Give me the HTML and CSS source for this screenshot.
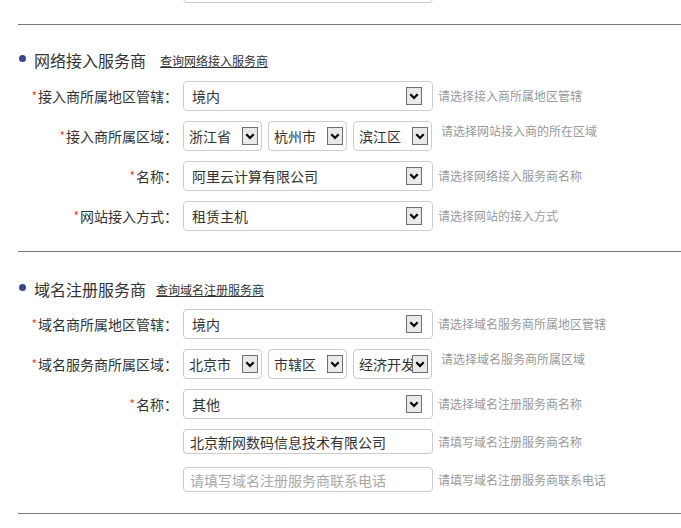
FILE: index.html
```html
<!DOCTYPE html>
<html lang="zh-CN">
<head>
<meta charset="utf-8">
<title>服务商信息</title>
<link rel="stylesheet" href="styles.css">
</head>
<body>
<div class="page">
  <div class="prev"><div class="prev-box"></div></div>

  <section class="group g1">
    <h2 class="group-title"><span class="dot"></span>网络接入服务商<a class="query q1" href="#">查询网络接入服务商</a></h2>

    <div class="row">
      <label class="label"><i class="req">*</i>接入商所属地区管辖：</label>
      <div class="select wide"><span class="val">境内</span><span class="arrow"><svg viewBox="0 0 10 7" width="10" height="7"><polyline points="1.3,1.3 5,5 8.7,1.3" fill="none" stroke="#000" stroke-width="2.2"/></svg></span></div>
      <span class="tip">请选择接入商所属地区管辖</span>
    </div>

    <div class="row">
      <label class="label"><i class="req">*</i>接入商所属区域：</label>
      <div class="selects">
        <div class="select small"><span class="val">浙江省</span><span class="arrow"><svg viewBox="0 0 10 7" width="10" height="7"><polyline points="1.3,1.3 5,5 8.7,1.3" fill="none" stroke="#000" stroke-width="2.2"/></svg></span></div>
        <div class="select small"><span class="val">杭州市</span><span class="arrow"><svg viewBox="0 0 10 7" width="10" height="7"><polyline points="1.3,1.3 5,5 8.7,1.3" fill="none" stroke="#000" stroke-width="2.2"/></svg></span></div>
        <div class="select small"><span class="val">滨江区</span><span class="arrow"><svg viewBox="0 0 10 7" width="10" height="7"><polyline points="1.3,1.3 5,5 8.7,1.3" fill="none" stroke="#000" stroke-width="2.2"/></svg></span></div>
      </div>
      <span class="tip tip-raised">请选择网站接入商的所在区域</span>
    </div>

    <div class="row">
      <label class="label"><i class="req">*</i>名称：</label>
      <div class="select wide"><span class="val">阿里云计算有限公司</span><span class="arrow"><svg viewBox="0 0 10 7" width="10" height="7"><polyline points="1.3,1.3 5,5 8.7,1.3" fill="none" stroke="#000" stroke-width="2.2"/></svg></span></div>
      <span class="tip">请选择网络接入服务商名称</span>
    </div>

    <div class="row">
      <label class="label"><i class="req">*</i>网站接入方式：</label>
      <div class="select wide"><span class="val">租赁主机</span><span class="arrow"><svg viewBox="0 0 10 7" width="10" height="7"><polyline points="1.3,1.3 5,5 8.7,1.3" fill="none" stroke="#000" stroke-width="2.2"/></svg></span></div>
      <span class="tip">请选择网站的接入方式</span>
    </div>
  </section>

  <section class="group g2">
    <h2 class="group-title"><span class="dot"></span>域名注册服务商<a class="query q2" href="#">查询域名注册服务商</a></h2>

    <div class="row">
      <label class="label"><i class="req">*</i>域名商所属地区管辖：</label>
      <div class="select wide"><span class="val">境内</span><span class="arrow"><svg viewBox="0 0 10 7" width="10" height="7"><polyline points="1.3,1.3 5,5 8.7,1.3" fill="none" stroke="#000" stroke-width="2.2"/></svg></span></div>
      <span class="tip">请选择域名服务商所属地区管辖</span>
    </div>

    <div class="row">
      <label class="label"><i class="req">*</i>域名服务商所属区域：</label>
      <div class="selects">
        <div class="select small"><span class="val">北京市</span><span class="arrow"><svg viewBox="0 0 10 7" width="10" height="7"><polyline points="1.3,1.3 5,5 8.7,1.3" fill="none" stroke="#000" stroke-width="2.2"/></svg></span></div>
        <div class="select small"><span class="val">市辖区</span><span class="arrow"><svg viewBox="0 0 10 7" width="10" height="7"><polyline points="1.3,1.3 5,5 8.7,1.3" fill="none" stroke="#000" stroke-width="2.2"/></svg></span></div>
        <div class="select small"><span class="val">经济开发区</span><span class="arrow"><svg viewBox="0 0 10 7" width="10" height="7"><polyline points="1.3,1.3 5,5 8.7,1.3" fill="none" stroke="#000" stroke-width="2.2"/></svg></span></div>
      </div>
      <span class="tip tip-raised">请选择域名服务商所属区域</span>
    </div>

    <div class="row">
      <label class="label"><i class="req">*</i>名称：</label>
      <div class="select wide"><span class="val">其他</span><span class="arrow"><svg viewBox="0 0 10 7" width="10" height="7"><polyline points="1.3,1.3 5,5 8.7,1.3" fill="none" stroke="#000" stroke-width="2.2"/></svg></span></div>
      <span class="tip">请选择域名注册服务商名称</span>
    </div>

    <div class="row row-input">
      <label class="label"></label>
      <div class="input"><span class="val">北京新网数码信息技术有限公司</span></div>
      <span class="tip">请填写域名注册服务商名称</span>
    </div>

    <div class="row row-input last">
      <label class="label"></label>
      <div class="input"><span class="val placeholder">请填写域名注册服务商联系电话</span></div>
      <span class="tip">请填写域名注册服务商联系电话</span>
    </div>
  </section>
</div>
</body>
</html>
```

FILE: styles.css
```css
html, body {
  margin: 0;
  padding: 0;
  background: #fff;
}
body {
  font-family: "Microsoft YaHei", "Noto Sans CJK SC", "Noto Sans", sans-serif;
  color: #333;
  overflow: hidden;
  width: 681px;
  height: 528px;
  text-spacing-trim: space-all;
}
.page {
  padding-left: 18px;
}
.prev {
  display: flex;
  align-items: flex-start;
  height: 3px;
  padding: 0 0 21px 165px;
}
.prev-box {
  box-sizing: border-box;
  flex: none;
  width: 250px;
  height: 30px;
  margin-top: -27px;
  border: 1px solid #ccc;
  border-radius: 4px;
}
.group {
  border-top: 1px solid #707a88;
}
.g1 {
  padding: 23px 0 10px;
}
.g2 {
  padding: 25px 0 21px;
  border-bottom: 1px solid #707a88;
}
.group-title {
  display: flex;
  align-items: center;
  height: 24px;
  margin: 0 0 9px;
  font-size: 16px;
  font-weight: normal;
  line-height: 24px;
  color: #333;
}
.g2 .group-title {
  margin-bottom: 8px;
}
.dot {
  width: 7px;
  height: 7px;
  border-radius: 50%;
  background: #3a4790;
  margin: -3px 8px 0 1px;
}
.query {
  font-size: 12px;
  color: #333;
  text-decoration: underline;
  line-height: 16px;
  margin-top: 2px;
}
.q1 { margin-left: 14px; }
.q2 { margin-left: 10px; }

.row {
  display: flex;
  align-items: center;
  height: 30px;
  margin-bottom: 10px;
}
.row-input {
  height: 25px;
  margin-bottom: 13px;
}
.row-input.last {
  margin-bottom: 0;
}
.label {
  box-sizing: border-box;
  width: 160px;
  margin-right: 5px;
  text-align: right;
  white-space: nowrap;
  font-size: 14px;
  line-height: 20px;
  color: #333;
}
.req {
  font-style: normal;
  color: #f0462a;
  font-size: 12px;
  margin-right: 1px;
  position: relative;
  top: -1px;
}
.select, .input {
  box-sizing: border-box;
  display: flex;
  align-items: center;
  height: 100%;
  border: 1px solid #ccc;
  border-radius: 4px;
  background: #fff;
  font-size: 14px;
  line-height: 20px;
  color: #333;
}
.val {
  flex: 1;
  min-width: 0;
  overflow: hidden;
  white-space: nowrap;
}
.wide {
  width: 250px;
  padding: 0 10px 0 8px;
}
.input {
  width: 250px;
  padding: 0 6px;
}
.placeholder {
  color: #a9a9a9;
}
.selects {
  display: flex;
  gap: 6px;
  height: 100%;
}
.small {
  width: 79px;
  padding: 0 3px 0 5px;
}
.arrow {
  box-sizing: border-box;
  flex: none;
  width: 16px;
  height: 18px;
  border: 1px solid #6f6f6f;
  background: #e9e9e9;
  display: flex;
  align-items: center;
  justify-content: center;
}
.arrow svg {
  display: block;
}
.tip {
  margin-left: 5px;
  font-size: 12px;
  line-height: 16px;
  color: #999;
  white-space: nowrap;
}
.tip-raised {
  align-self: flex-start;
  margin-top: 2px;
  margin-left: 9px;
}
```
